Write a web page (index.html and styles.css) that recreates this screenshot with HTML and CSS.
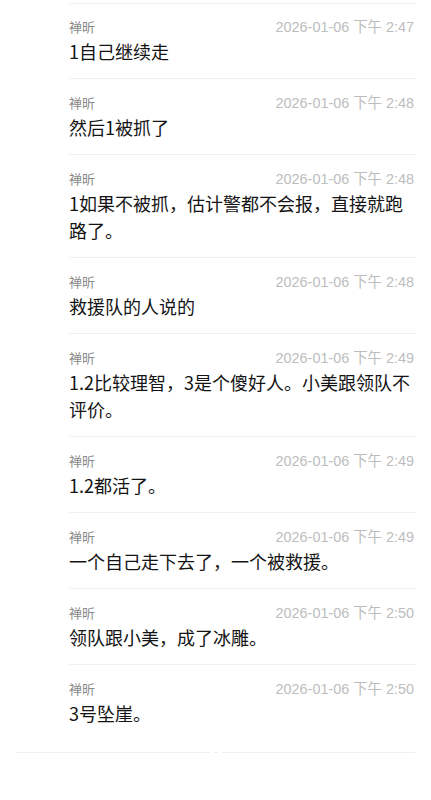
FILE: index.html
```html
<!DOCTYPE html>
<html lang="zh-CN">
<head>
<meta charset="utf-8">
<meta name="viewport" content="width=device-width, initial-scale=1">
<title>聊天记录</title>
<link rel="stylesheet" href="styles.css">
</head>
<body>
<div class="list">
  <div class="item">
    <div class="meta"><span class="name">禅昕</span><span class="time">2026-01-06 下午 2:47</span></div>
    <div class="msg">1自己继续走</div>
  </div>
  <div class="item">
    <div class="meta"><span class="name">禅昕</span><span class="time">2026-01-06 下午 2:48</span></div>
    <div class="msg">然后1被抓了</div>
  </div>
  <div class="item">
    <div class="meta"><span class="name">禅昕</span><span class="time">2026-01-06 下午 2:48</span></div>
    <div class="msg">1如果不被抓，估计警都不会报，直接就跑路了。</div>
  </div>
  <div class="item">
    <div class="meta"><span class="name">禅昕</span><span class="time">2026-01-06 下午 2:48</span></div>
    <div class="msg">救援队的人说的</div>
  </div>
  <div class="item">
    <div class="meta"><span class="name">禅昕</span><span class="time">2026-01-06 下午 2:49</span></div>
    <div class="msg">1.2比较理智，3是个傻好人。小美跟领队不评价。</div>
  </div>
  <div class="item">
    <div class="meta"><span class="name">禅昕</span><span class="time">2026-01-06 下午 2:49</span></div>
    <div class="msg">1.2都活了。</div>
  </div>
  <div class="item">
    <div class="meta"><span class="name">禅昕</span><span class="time">2026-01-06 下午 2:49</span></div>
    <div class="msg">一个自己走下去了，一个被救援。</div>
  </div>
  <div class="item">
    <div class="meta"><span class="name">禅昕</span><span class="time">2026-01-06 下午 2:50</span></div>
    <div class="msg">领队跟小美，成了冰雕。</div>
  </div>
  <div class="item">
    <div class="meta"><span class="name">禅昕</span><span class="time">2026-01-06 下午 2:50</span></div>
    <div class="msg">3号坠崖。</div>
  </div>
</div>
<div class="end">
  <span class="end-line"></span>
  <span class="end-dot"></span>
  <span class="end-line"></span>
</div>
</body>
</html>
```

FILE: styles.css
```css
html, body {
  margin: 0;
  padding: 0;
  background: #ffffff;
}

body {
  font-family: "Noto Sans CJK SC", "Noto Sans", sans-serif;
  color: #111111;
}

.list {
  padding-top: 3px;
  margin-left: 69px;
  margin-right: 16px;
}

.item {
  border-top: 1px solid #efefef;
  padding: 14px 0 13px;
}

.item:first-child {
  padding-top: 13px;
}

.meta {
  display: flex;
  justify-content: space-between;
  align-items: center;
  height: 20px;
}

.name {
  font-size: 13px;
  line-height: 20px;
  color: #8a8a8a;
}

.time {
  font-family: "Liberation Sans", "Noto Sans CJK SC", sans-serif;
  font-size: 14.4px;
  line-height: 20px;
  color: #bdbdbd;
  padding-right: 1px;
}

.msg {
  margin-top: 1px;
  font-size: 18px;
  line-height: 27px;
  color: #141414;
}

.end {
  display: flex;
  align-items: center;
  gap: 5px;
  margin: 12px 16px 0 16px;
  height: 1px;
}

.end-line {
  flex: 1;
  height: 1px;
  background: #f0f0f0;
}

.end-dot {
  width: 2px;
  height: 2px;
  border-radius: 50%;
  background: #d6d6d6;
}
```
